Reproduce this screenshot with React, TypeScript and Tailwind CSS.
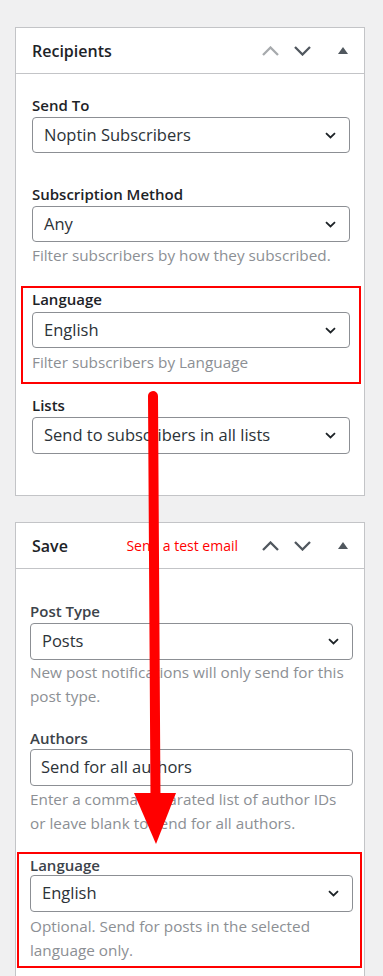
import React from "react";

const Chevron = ({ dir, className }: { dir: "up" | "down"; className?: string }) => (
  <svg width="17" height="10" viewBox="0 0 17 10" className={className}>
    <polyline
      points={dir === "up" ? "1,9 8.5,1.5 16,9" : "1,1 8.5,8.5 16,1"}
      fill="none"
      stroke="currentColor"
      strokeWidth="2.3"
    />
  </svg>
);

const Toggle = () => (
  <svg width="10" height="7" viewBox="0 0 10 7" className="text-[#50575e]">
    <polygon points="0,7 5,0 10,7" fill="currentColor" />
  </svg>
);

const HeaderIcons = ({ upDisabled }: { upDisabled?: boolean }) => (
  <div className="flex items-center">
    <Chevron dir="up" className={upDisabled ? "text-[#a7aaad]" : "text-[#50575e]"} />
    <Chevron dir="down" className="ml-[15px] text-[#50575e]" />
    <span className="ml-[27px]">
      <Toggle />
    </span>
  </div>
);

const Select = ({ value, className }: { value: string; className?: string }) => (
  <div
    className={`flex items-center justify-between border border-[#8c8f94] rounded-[4px] bg-white pl-[11px] pr-[13px] text-[16.5px] text-[#2c3338] ${className ?? ""}`}>
    <span>{value}</span>
    <svg width="11" height="7" viewBox="0 0 11 7">
      <polyline points="1,1.2 5.5,5.5 10,1.2" fill="none" stroke="#1d2327" strokeWidth="1.8" />
    </svg>
  </div>
);

const Label = ({ children, className }: { children: React.ReactNode; className?: string }) => (
  <div className={`text-[15px] leading-[20px] font-semibold ${className ?? "text-[#1d2327]"}`}>{children}</div>
);

const Help = ({ children, className }: { children: React.ReactNode; className?: string }) => (
  <p className={`text-[15.3px] leading-[24px] text-[#8c8f94] ${className ?? ""}`}>{children}</p>
);

export default function App() {
  return (
    <div className="relative w-[383px] h-[976px] overflow-hidden bg-[#f0f0f1] pt-[27px] pl-[15px] font-['Open_Sans',sans-serif]">
      {/* Recipients */}
      <section className="w-[350px] border border-[#c3c4c7] bg-white">
        <div className="flex items-center h-[46px] border-b border-[#c3c4c7] pl-[16px] pr-[16px]">
          <h2 className="flex-1 text-[16px] font-semibold text-[#1d2327]">Recipients</h2>
          <HeaderIcons upDisabled />
        </div>
        <div className="pt-[21px] pb-[41px] pl-[16px] pr-[14px]">
          <div>
            <Label>Send To</Label>
            <Select value="Noptin Subscribers" className="mt-[2px] h-[36px]" />
          </div>
          <div className="mt-[31px]">
            <Label>Subscription Method</Label>
            <Select value="Any" className="mt-[2px] h-[36px]" />
            <Help className="mt-[1px]">Filter subscribers by how they subscribed.</Help>
          </div>
          <div className="relative mt-[22px]">
            <Label>Language</Label>
            <Select value="English" className="mt-[3px] h-[36px]" />
            <Help className="mt-[2px]">Filter subscribers by Language</Help>
            <div className="absolute -left-[11px] -right-[11px] -top-[3px] -bottom-[10px] border-2 border-[#ff0000] pointer-events-none" />
          </div>
          <div className="mt-[21px]">
            <Label>Lists</Label>
            <Select value="Send to subscribers in all lists" className="mt-[2px] h-[37px]" />
          </div>
        </div>
      </section>

      {/* Save */}
      <section className="mt-[26px] w-[350px] border border-[#c3c4c7] bg-white">
        <div className="flex items-center h-[46px] border-b border-[#c3c4c7] pl-[16px] pr-[16px]">
          <h2 className="flex-1 text-[16px] font-semibold text-[#1d2327]">Save</h2>
          <span className="mr-[24px] text-[14px] text-[#ff0000]">Send a test email</span>
          <HeaderIcons />
        </div>
        <div className="pt-[32px] pb-[20px] pl-[14px] pr-[11px]">
          <div>
            <Label className="text-[#3c434a]">Post Type</Label>
            <Select value="Posts" className="mt-[2px] h-[37px] pl-[10px]" />
            <Help>New post notifications will only send for this post type.</Help>
          </div>
          <div className="mt-[20px]">
            <Label className="text-[#3c434a]">Authors</Label>
            <div className="mt-[1px] flex items-center h-[37px] border border-[#8c8f94] rounded-[4px] pl-[10px] text-[16.5px] text-[#2c3338]">
              Send for all authors
            </div>
            <Help className="mt-[1px]">Enter a comma-separated list of author IDs or leave blank to send for all authors.</Help>
          </div>
          <div className="relative mt-[20px]">
            <Label className="text-[#3c434a]">Language</Label>
            <Select value="English" className="h-[37px] pl-[10px]" />
            <Help className="mt-[2px]">Optional. Send for posts in the selected language only.</Help>
            <div className="absolute -left-[13px] -right-[9px] -top-[3px] -bottom-[6px] border-2 border-[#ff0000] pointer-events-none" />
          </div>
        </div>
      </section>

      {/* annotation arrow */}
      <svg className="absolute left-0 top-0 pointer-events-none" width="383" height="976" viewBox="0 0 383 976">
        <path d="M153 396 L155.5 800" stroke="#ff0000" strokeWidth="10" strokeLinecap="round" fill="none" />
        <polygon points="134,793 176,793 156,844" fill="#ff0000" />
      </svg>
    </div>
  );
}
